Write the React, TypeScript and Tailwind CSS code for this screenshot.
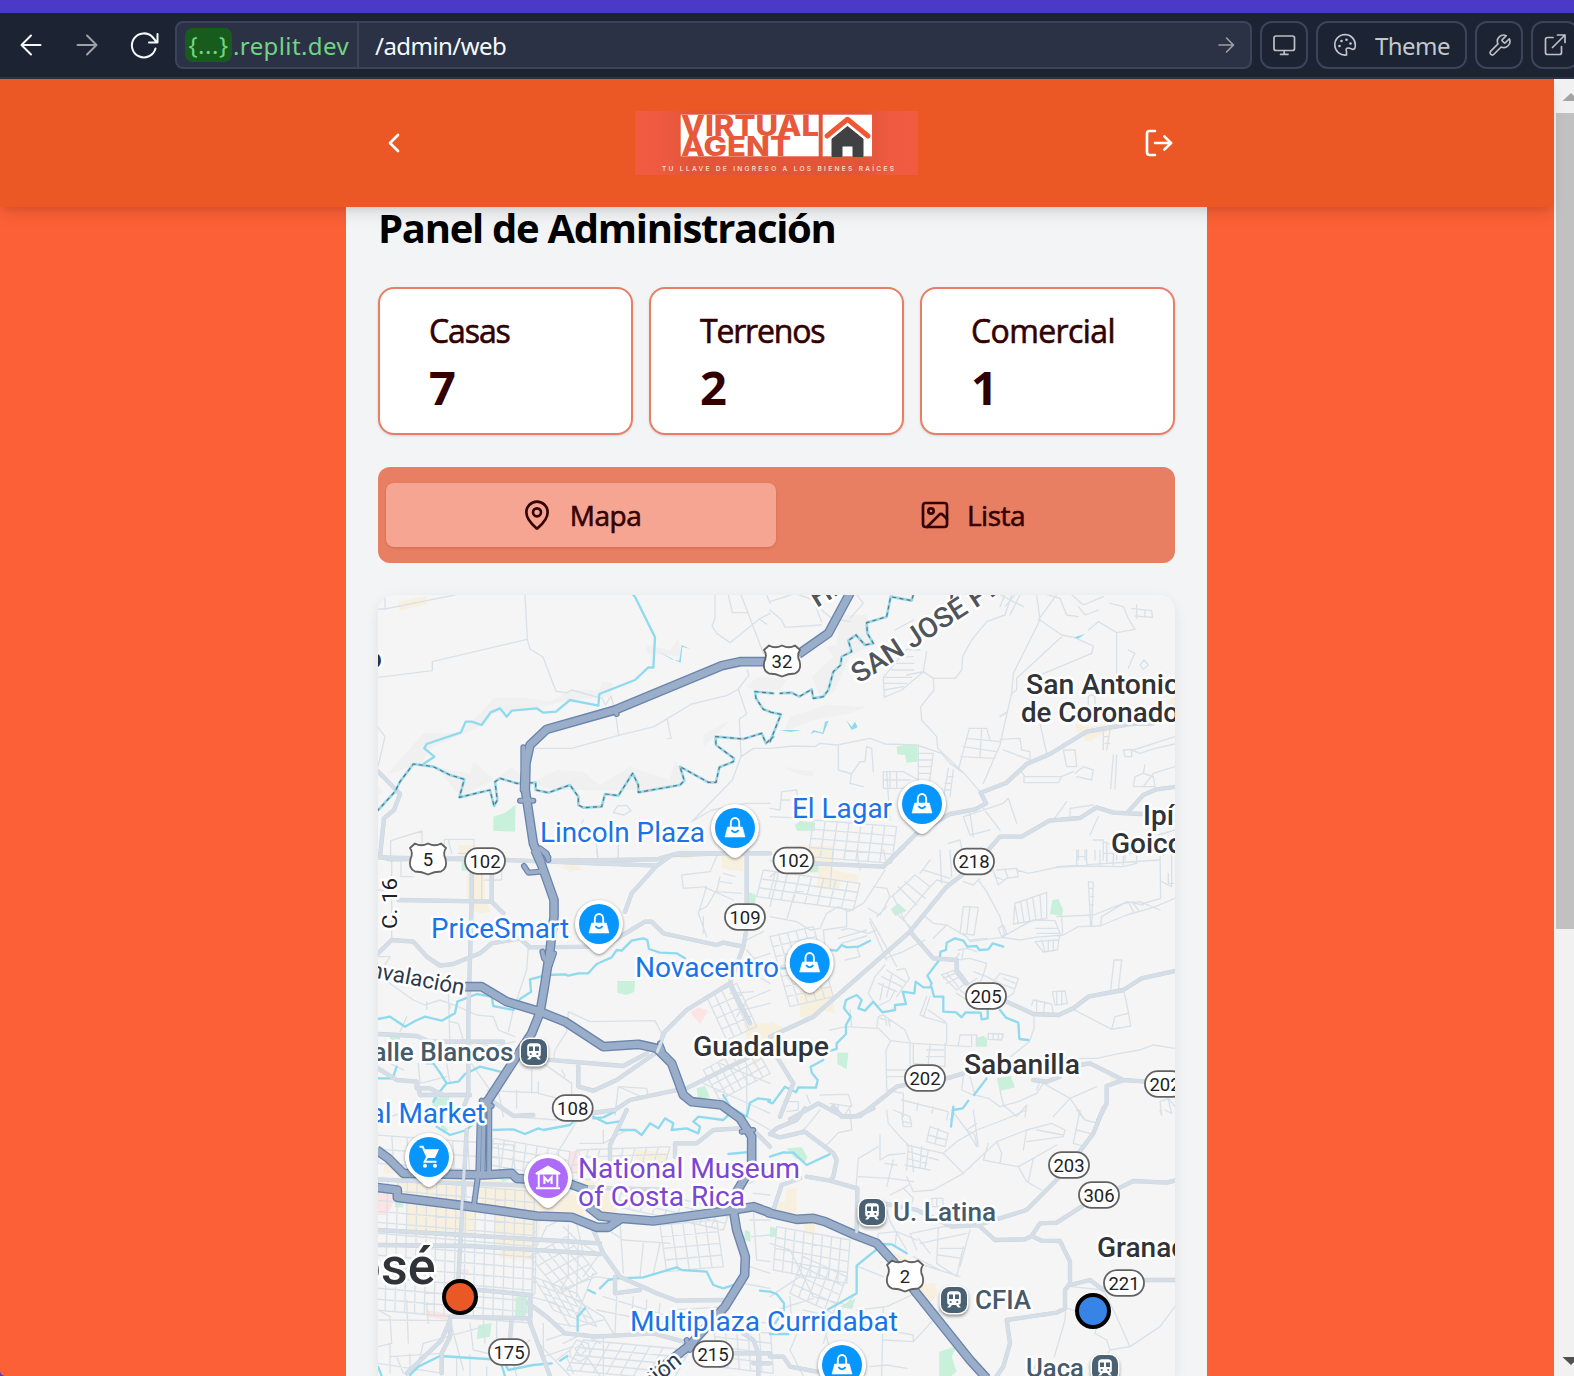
import React from "react";
import { ChevronLeft, LogOut, MapPin, Image as ImageIcon } from "lucide-react";

type Sheet = "A" | "B" | "C" | "D" | "E" | "F";
type Seg = [Sheet, string];

/* The map is surveyed in six sheets, each drawn at three units per pixel. */
const origin: Record<Sheet, string> = {
  A: "translate(370 590) scale(0.33333)",
  B: "translate(770 590) scale(0.33333)",
  C: "translate(370 850) scale(0.33333)",
  D: "translate(770 850) scale(0.33333)",
  E: "translate(370 1110) scale(0.33333)",
  F: "translate(770 1110) scale(0.33333)",
};

/* Builds a street grid: lines across a parallelogram with given corner and side vectors. */
const grid = (x: number, y: number, ux: number, uy: number, vx: number, vy: number, n: number, m: number) => {
  let d = "";
  for (let i = 0; i <= n; i++) d += `M${x + (ux * i) / n} ${y + (uy * i) / n}l${vx} ${vy}`;
  for (let j = 0; j <= m; j++) d += `M${x + (vx * j) / m} ${y + (vy * j) / m}l${ux} ${uy}`;
  return d;
};

const minor: Seg[] = [
  ["A", "M20 57L45 57L260 14M45 57V14M465 14L472 148L187 215V242L24 262M472 148L480 177L519 201L558 304L590 308L605 300L697 326L706 345L723 318L735 360L746 436M495 475H605L746 436L852 410L965 342L1070 317L1105 297L1137 255L1132 240M1105 297L1130 372L1108 387L1113 500L1087 570L965 695M892 390L903 445L893 446M1113 500L1150 475H1200M24 412L45 440L24 530M1035 14V85L1026 108L1040 130L1080 158L1168 87L1200 70M1075 14L1087 68H1130M1113 14L1180 190M1168 87L1190 102M1190 14L1200 40M62 810V752L156 723V765M223 810V748H312V790M235 750L245 790M265 790H400M965 695L1025 660L1130 640H1200M730 668L742 648L770 646L783 662L762 675Z M675 735L685 810M745 712V810M635 700L640 690"],
  ["B", "M0 60L35 90L45 112L155 105M0 35L65 14M85 14L130 30L155 95M155 60L185 85L240 95M260 14L280 40L240 85M375 120L430 90M470 185L460 245L410 255M340 262L410 178L450 180M340 262L343 322L395 300L460 245L490 265L555 265L575 240L578 200L605 150L650 95L705 75L725 14M490 265L492 300L452 350L455 390L500 440L503 475L580 548L630 605M800 14L810 90L730 250L725 310L712 365L690 465L640 580M725 310L740 300V265L875 140M810 90L875 135L912 142L970 168L965 190L770 272M712 365L690 380M810 400L830 490M750 14L720 75M860 14L805 90M345 262H425M345 280H410M343 300L400 290M365 240H430M370 220H432M385 200H430M705 14L690 50M735 14L705 50M690 14L760 50M830 14L870 25L890 75L925 80M905 14L940 45L1000 20M925 50L945 75L985 60M955 120L985 95L1040 128L1095 118L1075 85L1060 50L1020 40M1040 128V275M1085 55L1145 62L1147 82L1095 78M1100 45V85M1125 60V80M1075 180L1095 190L1085 210L1075 235M1110 225L1122 210L1135 225L1120 238Z M955 320V360M975 320V360M955 320Q965 310 975 320"],
  ["B", "M0 475L70 468L135 470L150 460L200 465L300 445L345 462L440 465L515 490L540 520L580 548M205 465V540L245 552L240 580L280 590M245 552L270 515L285 515M285 515L290 470L305 475L310 545M340 545H400L445 570M340 545V595H420M340 570H420M360 545V595M380 548V595M445 465V580M445 490H490M445 510H485M445 530H485M445 550H480M490 490L475 600M535 535L520 625M550 540L540 620M530 560H550M525 580H545M522 600H542M598 415H650M598 415L565 540M650 415L660 450M590 445L690 455M580 470L680 485M572 500L670 505M635 415L630 500M690 448L750 445L755 480L780 485V510L700 480M750 540L765 560H875L910 545M762 560V578H865L875 560M880 480H915L920 530L890 530ZM915 550L940 530L970 540L965 570L920 560M1000 425V480M1020 420L1010 480M1030 495L1022 595M1040 495L1035 595M1000 440H1015M1005 460H1020M1060 480L1085 478V500H1065ZM1085 480L1110 490L1155 475M1125 525L1120 550L1150 560L1155 590H1090L1095 560L1120 550M1155 475L1215 462M1090 480L1215 440M1120 590L1150 550L1215 530M0 655L30 660L35 605L80 600L82 630M0 680L110 685M350 545L360 690M35 630H60"],
  ["B", grid(130, 690, 250, 20, -15, 110, 7, 4) + "M580 680L700 640L715 625L740 700M580 680L600 735L660 720M600 670L610 740M640 655L690 720M535 760L570 750L580 800M890 635L850 690M900 690V655L970 645M985 680L960 735M970 750H1000V810M925 780V810M945 780V810M1000 755L1090 790M1010 760V810M1040 770V810M1065 780V810M1000 790H1090M1165 735L1215 720M1175 735L1180 770L1215 775"],
  ["C", "M65 20V270M24 120H65M93 30V80H130M395 90V30M395 90H345M310 150V35M335 150V35M680 0L685 40M745 0V38M935 75L1020 65L1040 20M935 75L940 115L1010 110M1010 110L985 190L1010 260M1000 110L1090 150M1040 120L1010 170L990 180M1050 80L1040 125L1115 130M1060 70L1095 80M1050 95L1085 100M1000 200V250M475 290L470 360L430 480L415 545M24 375L130 450L165 465L210 450L265 470L320 495L370 500L385 540L435 560M170 455V478M240 460V475M300 490L295 520M160 385L175 395M24 320L60 320L45 345M590 545L595 485L660 515L855 512L880 560L875 600M590 545L555 600L550 630M520 640L605 700V750M575 660L585 680M235 420L240 600L230 640L240 700M240 515L265 520L280 570L370 590L435 575M300 570L290 620L360 720M90 545L110 500M485 660V730M350 722L505 728V695M735 795L745 710L830 715L835 740L790 745M750 712L810 738M1100 500L1130 450L1200 420M1080 430L1150 425M1120 480L1200 460M1130 300L1200 380M1130 270L1180 245M1140 330L1200 310M1130 360L1200 400"],
  ["C", grid(1000, 660, 150, -80, 50, 90, 7, 4) + grid(1010, 440, 90, -40, 60, 130, 4, 4) + "M1150 600L1200 580M1050 640L1200 700M1130 650V800M1000 700L1200 790M24 600H60V640L100 660M145 640L150 700L230 680M440 720V775M380 700L400 800M505 730L620 760"],
  ["D", grid(-20, 60, 290, 40, -20, 80, 8, 3) + grid(0, 260, 130, -30, 60, 210, 5, 7) + "M0 200L80 215L120 240L150 235L170 190L205 170L235 185L280 160L310 115L345 60M100 125H75L50 210M230 185V230L160 240M160 240L165 290M215 240L235 235L295 250L320 240L300 205M205 265L290 240M215 280L290 258M220 290L260 290L270 320L225 330M300 215L350 330M315 230L380 350M345 325L400 305L465 270M310 110L350 115L360 140L330 195L295 175M365 140L435 75L480 110L400 205L370 140M385 110L440 165M405 95L465 145M370 180L430 240M400 205L425 245M350 170L320 200M480 110L500 90L540 100M450 70L480 30M460 60L540 85M510 0L515 100M540 0L545 80M460 195L490 220L530 225L590 260L600 275L695 262L770 220L790 210M530 225L490 265M625 90L650 125L690 200L705 258M570 250L580 170L625 172L612 255ZM600 170L590 250M685 235L700 225L710 250L695 260ZM740 60L775 70L860 52L935 48L1060 50L1100 40M650 70L670 60L685 105L710 85L745 80L740 55L680 60M675 80L700 90M705 60L715 85M580 95L610 105L630 85M860 50L1170 30M920 0V48H950V0M920 20H950M975 30V0M990 45V0M1010 45V0M1030 45V0M1060 45V0M1100 40V0"],
  ["D", "M735 160L830 127V205L730 222ZM735 165L745 220M752 155L762 218M770 150L780 215M788 143L798 210M810 135L815 208M790 210L855 212L870 250L862 300L820 306L795 275L865 270M798 235H860M800 250H865M815 270L825 305M835 270V305M850 270V303M695 262L750 270L795 262L880 255L925 230L990 228L1070 195L1150 172L1215 145M860 200L970 195L1060 160L1110 155L1170 180M875 200L878 250M955 95L970 97L965 228M955 95L962 228M960 115H970M962 140H972M960 165H970M992 225L995 200L1070 155L1120 165M1075 155L1090 185M1085 155L1105 180M1170 0L1172 145L1115 162M1205 0V110L1175 95M1195 70V100H1210M1022 420L1032 330H1055L1045 420M910 478L1025 538L1082 528L1075 485L1062 425M1025 538L1035 500L1075 490M785 465L790 450L845 462L850 490M800 450V490M825 455L820 490M847 425L885 423L892 460L855 465ZM860 425V465M875 425V465M792 500V535L778 575L722 620M600 270L650 265M565 300L590 295L620 305M568 310L555 330L600 325L650 340L640 375M580 300L575 330M515 375L550 362L585 405L600 400M515 375L560 420L580 405M530 370L565 410M520 385L555 370M530 400L570 380M560 430L590 450L600 470M570 420L600 445M690 370L745 385L730 430L700 450M690 370L660 410M700 385L735 400M690 400L730 415M610 365L650 380L690 400M620 385L600 400M640 375L625 410M345 345L315 380L295 430L320 470L360 450M325 400L380 425M335 380L395 410M350 360L405 395M340 400L330 450M365 375L350 440M380 360L405 355L418 385L380 440M360 450L375 420"],
  ["D", "M230 530L320 535L325 500L340 495L405 540L420 575M325 500L320 535M325 535L362 572L430 580L600 590M362 572L348 600L350 720L400 730V800M420 575V650M350 660H415M350 680H400M430 580V640L480 645L525 650V580M480 585L475 640M470 600H525M470 620H525M480 440L460 500L530 520V580M470 440L450 495L475 505M475 480L525 515M330 505L370 515M345 500L350 525M355 505L360 530M570 555L565 585M570 555H620V585M655 550L700 552L695 570L655 568ZM670 550V568M685 550V568M605 560V590M600 680L615 735L655 745L690 770L745 755L800 730L820 700L900 745L980 710M820 700L812 690L800 720M900 745L850 800M580 680L575 720L610 735M690 720L700 765L740 800L770 765L765 800M1050 610L1110 600L1150 585L1215 595M830 625L980 625L1050 610M900 745L945 810M1170 755L1195 745L1215 770M1170 755L1175 795M1195 750L1205 790M395 750L535 785L530 810M150 735L235 733L245 765L220 800M180 760L245 770M205 765L200 790M40 755H85V780L50 785M110 735L120 760M445 758L440 780M490 770L485 790M240 480L245 530M180 540L230 530"],
  ["E", grid(20, 75, 410, 30, 5, 85, 9, 2) + grid(24, 205, 470, 40, -8, 395, 16, 12) + grid(370, 85, 230, 40, -10, 80, 7, 3) + grid(490, 335, 10, -10, -5, 225, 1, 6)],
  ["E", grid(620, 120, 280, -10, -25, 90, 8, 4) + grid(760, 230, 320, 70, -20, 60, 9, 3) + grid(870, 345, 170, -15, 20, 140, 5, 4) + grid(480, 440, 110, -60, 90, 110, 5, 4) + grid(490, 500, 130, 50, 60, 100, 5, 4)],
  ["E", "M495 420L530 350L580 325M580 350L620 390L690 435M595 345V500L570 540M625 390L620 560M690 430L640 500M570 540L680 500L740 510M750 335L760 490M820 400L810 500M700 350L760 390L900 400M870 400L850 490M620 340L640 430M480 560L560 580L600 650M670 490L620 620M600 560L700 620L730 670M560 640L620 650L700 630M900 660V600L1080 590M700 560L900 620M740 560L735 670M790 560L780 670M830 570L825 670M870 580L860 670M680 600L880 640M24 630L240 632M24 600L60 620L65 700L24 710M110 570L115 700M140 780L160 700L340 650M240 630L280 780M170 580L175 640M60 740L220 730M60 700V790M120 730V798M300 640L310 720L440 750M340 620L345 700M380 620V700M100 790L80 740M24 760L220 790M260 740V798M300 735V798M350 770V798M480 690L440 720M420 700L360 740M430 760L440 798M520 640V740L610 710M530 690L590 670"],
  ["E", grid(640, 690, 320, 30, -50, 90, 8, 4) + grid(1030, 620, 170, 20, 10, 150, 5, 5) + "M600 720L620 690L655 700L660 735L630 755L600 740ZM580 700L640 670L690 700M590 740L610 790M650 740L690 798M615 715L635 702L648 720L630 738ZM560 750L600 720M700 680V798M505 700L600 798M1130 20L1200 60M1140 220L1200 180M1150 250L1200 255M1140 330H1200M1145 380L1200 375M1150 300L1160 450L1200 455M1140 470L1200 490M1120 520L1200 535M640 0L580 100L560 130M24 30L130 0M400 0L430 20L560 30M770 60L700 100L630 100M700 100L700 60"],
  ["F", "M150 0L110 50L85 70M240 0L245 60L205 68L170 105M350 0L355 40L390 80L415 105L410 180M370 0L420 20L425 50L400 50L395 10M400 35L425 40M330 75V150L355 135L405 130M325 110L265 145L258 235M265 200L360 205L430 215M345 160L380 165M370 150L350 230M410 105L520 130L560 95L620 60L700 30L770 0M415 125L505 150M410 145L470 160M405 165L480 180M425 105L430 185M455 110L450 170M475 120L465 175M480 50L535 70L525 110L470 95ZM505 55L495 100M475 75L530 90M520 130L580 190L490 240L430 245L410 200M580 190L680 95L770 60M590 60L615 75L620 110M545 0L590 60L620 40M610 0L625 110M680 95L695 130L690 160L745 170L790 145L860 105M655 100L640 150L690 160M745 170L770 215L815 240M790 145L775 215M770 60L845 40L885 60L880 80L770 95M800 60L880 75M770 60L760 120M920 0L945 30L985 40M930 0L910 100L945 110M920 60L960 70M1170 0L1175 15M1185 0L1205 10M400 235L430 265L425 280M360 255L400 235L415 225M485 265H518L520 300M485 265V290H520M500 265V290"],
  ["F", grid(20, 350, 220, 40, -10, 130, 8, 4) + grid(100, 440, 130, 60, -40, 110, 5, 4) + "M0 400L60 420L130 560L250 590M0 560L90 500M20 600L130 565M60 560L65 640M250 560L180 640L160 700M350 300L360 335L410 420M450 400L590 370M425 370L520 350L570 350M505 355L500 460L560 500L580 410M600 360L570 470M510 415H580M505 435L575 445M460 465L570 500M430 440L510 480M325 370L380 365L440 390M325 370L320 400M380 365L375 410M420 370L440 420M445 385L480 430M260 600L350 590L425 555M265 470L340 500M100 600L270 640M160 640L180 720M210 650L340 640M290 650L430 675V695L340 690M340 590L335 798M430 695L490 630L510 600M300 770L350 765L410 775M90 650L60 720L100 798M890 550L885 630L853 740M905 530L1000 540L1035 610L1080 710M890 595L950 610L985 635L975 670L1010 690L1020 720L1080 710L1170 650L1215 590M800 760L780 798M1020 720L1000 760M590 60L620 110"],
  ["D", "M0 30L30 50L0 170M30 60L0 80M100 0L90 50M190 0L180 110M260 0L270 60M340 0L350 40"],
];

const arterial: Seg[] = [
  ["A", "M20 540L90 612L72 660L42 685L30 800L60 808L290 805M550 812L860 808M870 805L925 790H1200"],
  ["B", "M360 810L440 730L540 672L615 658L648 640L632 608L710 578L770 522L840 492L950 425L1080 402L1150 400M655 780L690 740L755 740L838 692L930 684L980 652L1030 668L1115 672M1075 665L1120 615L1160 598L1220 590"],
  ["C", "M24 22L290 28M410 30L860 47L905 15L1060 10M860 47L785 130L765 185M1130 0V165M1130 235L1120 290L1060 278L1040 285L880 250L845 215L825 215L700 290L480 292L450 265M85 150L365 155L400 190M365 30V155M305 60V155L295 500V735L270 800M24 310L65 270L130 275L170 320L210 347L250 342L330 310L365 280L450 265M1120 290L1080 400L950 480L880 550L865 600M1080 400L1140 520M24 552L140 558L180 575L400 575M520 628L760 648L830 610M625 640V710L670 722L740 690L870 600M930 725L1200 590M930 718L780 750L735 780L600 798L560 800M490 795L430 798L370 755M300 735H150L140 695L80 690L24 655M140 695V715H180L220 735H300"],
  ["D", "M340 50L400 -10M340 50L130 40M580 72L530 110L420 245L130 500L0 560M420 245L490 325L560 330V360L590 400M710 455L790 492L865 495L910 475L955 440L1060 420L1115 385L1220 362M530 685L580 670M405 705L380 710L270 798L220 800L145 760L60 808M20 620L70 700L30 800M790 690L830 695L870 680M930 645L960 640L1060 690L1130 695M1060 690L1010 708L1010 760L985 810"],
  ["F", "M0 72L30 82L105 65L190 130L200 150L190 200L180 212L110 200M105 -5L80 30L20 55L0 72M190 -10L215 20L260 18L310 -5M180 212L262 235L260 365M10 300L35 225L90 205M340 280L440 300L545 350L625 345L770 300L865 205M1000 -5L970 70L925 130M625 345L675 390L765 388L785 378L810 340L860 338L935 290M785 378L815 392L870 393L900 455L900 520L885 540L885 595L860 608L710 630L720 700L700 770L680 798M900 525L960 510L1000 540M1045 235L1090 213L1190 218L1220 210M1115 510H1215M0 740H40L60 770L140 785"],
  ["E", "M24 208L275 220L890 240M24 360L280 375L520 390L690 400M24 405L300 408L690 432M290 60L265 510M240 540H330L480 555V620M240 620L475 625L540 798M475 580L530 620L585 670L680 680L850 670L960 700L1020 730M425 625L420 690M240 630L215 690L110 790M240 630V680L215 730V790M670 360L700 430L750 500L860 550L920 572L1060 570M735 500V550L810 540M680 190L720 160L720 105L770 0M915 140V100H980L1030 60L1110 55L1160 70L1200 110M1120 670L1150 690L1165 730V798M1070 730H1200M1150 760H1200"],
];

const mountain: Seg[] = [
  ["A", "M50 555L160 430L270 430L335 365L370 325L470 325L540 335L600 300L690 300L695 275L730 280L720 320L600 330L500 355L370 370L330 410L190 470L150 520Z M195 525L235 540L300 550L310 515L375 570L425 530L480 580L560 540L640 545L690 585L780 530L900 570L915 510L950 580L880 600L700 600L560 600L390 560L270 620Z M1000 470V435L1080 390L1040 435Z M830 165L900 180L925 145L935 200L830 190Z M24 590L40 605L24 615Z M1130 290L1160 262H1200V300H1150Z"],
  ["B", "M125 260L190 200L170 170L200 165L205 75L290 75L310 160L240 200L190 310L150 320Z M60 380L170 345L290 350L240 370L130 390L80 410L40 430Z M35 530L130 545L130 560L90 555Z M0 260L50 270L30 300H0Z"],
];

const parks: Seg[] = [
  ["A", "M370 680L405 668L437 645L435 725L370 722Z"],
  ["B", "M380 470L410 463L442 467L443 515L410 518L405 495L382 493Z M75 705L90 693L135 697V722H80Z"],
  ["C", "M742 393H795L793 425L770 435L742 428Z M1135 125L1158 135L1155 160L1135 158Z M980 715L1005 708L1020 740L985 750Z M190 745L240 740L225 780H185Z M275 35H290V62H275Z M60 560H90V575H60Z"],
  ["D", "M120 42H145V67H120Z M362 178L385 160L410 182L375 198Z M847 150L865 147L880 180L875 198L840 192Z M202 608H235L230 657L202 643Z M617 565L640 557L652 567L650 590H617Z M680 685L722 678L735 712L690 723Z"],
  ["E", "M437 560L470 555L473 600L465 622L435 620Z M325 645L365 640L360 680L320 687Z M1125 360L1140 365L1142 395L1122 390Z M75 275H100V292H75Z M205 30L235 60L220 70Z M380 200L430 205L400 215Z"],
  ["F", "M50 115L95 112L112 140L105 155L75 145Z M0 350L20 355L18 380L0 382Z M210 590L257 565L245 598Z M508 725L560 708L545 740L560 785L540 800H508Z"],
];

const shops: Seg[] = [
  ["A", "M85 35L170 18L172 42L90 62Z M265 765H310L325 795L270 798Z M585 805L625 800V810H585Z M930 782H970V805H930Z"],
  ["B", "M918 402L955 410L1040 402L1060 410L1000 430L960 455L945 450L940 430L920 425Z M80 765L190 768V810H80Z M1190 335L1215 320V345H1195Z"],
  ["C", "M290 75L345 72V150L362 185L330 190L305 180L290 150Z M570 50L600 42L632 50V60L600 65Z M1055 10H1120V65L1055 55Z M1120 520L1200 520V610L1150 650Z"],
  ["D", "M110 0L190 10L185 60L265 75V95L215 90L205 120L140 115L145 70L100 40Z M90 400L180 415L195 490L150 480L130 510L90 500Z M0 515L40 530L40 570H0Z M1020 675L1050 690L1055 705L1025 700Z"],
  ["E", "M50 120L80 165L100 190L40 190Z M80 205L280 210V280L90 262Z M110 280L320 305L315 370L110 380Z M325 200L480 230L620 270L600 320L330 290Z M380 300L515 320L500 410L490 450L390 445V410L370 380Z M620 190L740 250V310L700 310L650 290Z M790 115L890 130L895 160L800 155Z M590 250L640 260V320L600 315Z"],
  ["F", "M50 235H80V310L20 310L15 280L45 275Z M75 315L135 320L135 375L110 378L100 345L80 340Z M335 440L375 430L430 455L400 470L370 460Z M430 520L495 520L503 550L465 600L440 570Z"],
];

const clinics: Seg[] = [
  ["C", "M960 487L985 472L1015 482L990 522Z"],
  ["E", "M24 245H75L65 290L50 315H24Z M600 125L632 120L625 200L598 170Z M268 477H295V495L270 493Z M168 600L240 612V632L170 620Z"],
];

const water: Seg[] = [
  ["A", "M785 10L795 20L855 142L850 233L835 232L795 270L688 312L685 347L600 330L558 365L520 368L500 355L425 362L410 380L390 355L362 367L335 405L305 395H287L273 427L170 462L163 475L193 500L160 522"],
  ["C", "M530 375L585 373L595 377L625 370H655L680 342L725 322L740 300L755 302L785 272L820 265L832 270L837 297L870 308L920 310L945 325M530 375L480 388L483 425L450 447L430 480L370 468L365 440L320 432L262 455L255 490L215 512L165 500L135 513L105 530L60 500L24 507M390 665L330 650L285 672L265 695L230 700L210 668L190 640L170 640M230 700L205 730L190 755M80 650L68 685L24 685M670 805L700 802L735 785M1200 750L1165 745L1140 758L1130 800L1080 770L1060 735"],
  ["D", "M180 300L200 302L215 285L230 292L265 290L300 272M700 290L668 280L655 298L628 300L620 288L592 290L580 272L555 265L530 278L528 300L512 305L508 330L472 377L485 400L480 412L460 412L437 395L433 430L398 425L408 462L375 465V480L337 487L310 455L285 482L265 475L275 450L260 435L228 450L222 475L242 500L228 525V552L200 580V597L182 602M160 630L122 650L125 668L143 690L138 713L85 712L78 727L45 710L8 760L-5 755M485 412L492 440H520V485L558 487L575 502L587 487L632 488L635 508L653 505V480M690 480L708 503L745 518L748 567L775 570M650 685L612 735M595 752L578 775L550 780L545 810M20 355L45 355"],
  ["F", "M550 -10L543 50M0 140L40 127L70 128L110 165L178 133M410 430L365 403L340 402L260 467V550L175 598M0 545L20 552L42 580V600L15 640M0 672H55"],
  ["E", "M370 60L430 58L465 72L505 55L520 60L600 45L625 20M670 20L710 40L745 35M750 60L795 60L815 75L840 40L865 55L885 25L910 40L905 60L950 55L985 70L990 50L970 35L985 20L1060 30L1080 10M1075 132L1150 125M690 535L715 510L740 505L820 502L920 472L935 480L1010 485L1030 525L1060 535L1120 515M655 540L675 550M645 595L623 620V662M120 795L145 770L210 738L400 750L415 780L490 765L545 760M405 798L390 750M570 752L592 738M24 770L35 798M200 50L240 75L290 60L310 40M1170 542L1200 545"],
];
const border: Seg[] = [
  ["A", "M20 665L75 605L90 575L130 522L190 530L240 555L283 568L268 622L360 600L372 648L382 630L375 575L390 565L440 580L497 578V600L535 608L600 585L625 620V645L640 653L695 650L705 612L745 617L788 550L805 585V607L930 585L943 572L930 530L1015 577H1038L1048 532L1090 515L1092 505L1038 465L1037 440L1120 447L1175 430L1188 460L1210 440M1210 310L1155 305L1158 325L1180 358L1200 365"],
  ["B", "M430 14L425 32L362 20L350 80L290 98L292 130L310 160L285 165L258 135L235 152L245 185L215 200L212 225L190 245L175 300L160 320L130 325L125 298L88 320L65 308L30 310M0 366L33 373L0 455"],
];

const highways: Seg[] = [
  ["A", "M1190 215L1110 215L1055 227L735 360L530 418L480 465L468 520L466 600L475 660L490 760L515 820"],
  ["B", "M85 193L175 130L245 0"],
  ["C", "M495 0L515 45L552 150L552 200L540 300L525 400L510 488L485 550L355 750L340 765"],
  ["C", "M285 410L335 410L410 455L510 485L585 515L700 590L805 583L860 595L905 640L940 735L965 755L1055 765L1110 805L1145 860L1145 950L1100 1025"],
  ["E", "M1090 300L1100 360L1126 440L1124 495L1065 590L960 705L840 800"],
  ["E", "M20 120L55 145L100 190L340 195L425 190L440 205L480 208M600 222L650 240M655 290L690 318L750 325"],
  ["E", "M20 232L82 240L82 262L280 287L500 318L605 322L680 352L715 352L755 325L850 333L1090 300L1150 290L1200 308"],
  ["F", "M-10 307L80 328L130 325L165 335L255 375L320 400L370 455L440 550L600 750L650 805"],
];
const ramps: Seg[] = [
  ["A", "M460 472V540L458 600M450 632L490 632M735 360L740 372M510 775L530 790L535 810"],
  ["C", "M462 48L475 68L510 65M517 305L522 325L540 345L552 310M520 5L535 22M870 580L878 600M335 752L365 768"],
  ["E", "M330 -15L325 190L312 285M358 -15L357 190L345 195M342 -15L338 190M1115 65L1150 60M950 690L960 720L985 680"],
];

function Lines({ segs, stroke, width, dash, cap = "round" }: { segs: Seg[]; stroke: string; width: number; dash?: string; cap?: "round" | "butt" }) {
  return (
    <g fill="none" stroke={stroke} strokeWidth={width} strokeDasharray={dash} strokeLinejoin="round" strokeLinecap={cap}>
      {segs.map(([s, d], i) => (
        <path key={i} d={d} transform={origin[s]} />
      ))}
    </g>
  );
}
function Areas({ segs, fill }: { segs: Seg[]; fill: string }) {
  return (
    <g fill={fill}>
      {segs.map(([s, d], i) => (
        <path key={i} d={d} transform={origin[s]} />
      ))}
    </g>
  );
}

type LabelProps = { x: number; y: number; w?: number; size?: number; color: string; weight?: number; end?: boolean; turn?: number; children: string };
function Label({ x, y, w, size = 28, color, weight = 400, end, turn, children }: LabelProps) {
  return (
    <text
      x={x}
      y={y}
      textLength={w}
      lengthAdjust="spacingAndGlyphs"
      fontSize={size}
      fontWeight={weight}
      fill={color}
      textAnchor={end ? "end" : "start"}
      transform={turn ? `rotate(${turn} ${x} ${y})` : undefined}
      stroke="#ffffff"
      strokeWidth={5}
      strokeLinejoin="round"
      paintOrder="stroke"
    >
      {children}
    </text>
  );
}

function Route({ x, y, children }: { x: number; y: number; children: string }) {
  return (
    <g>
      <rect x={x - 20} y={y - 12.8} width={40} height={25.6} rx={12.8} fill="#fff" stroke="#616161" strokeWidth={1.8} />
      <text x={x} y={y + 6.7} textAnchor="middle" fontSize={18.5} fill="#202124">{children}</text>
    </g>
  );
}
function Shield({ x, y, children }: { x: number; y: number; children: string }) {
  return (
    <g>
      <path
        transform={`translate(${x} ${y})`}
        d="M-13 -15.5Q-7 -12 0 -15.5Q7 -12 13 -15.5L18 -11Q14.500 -6 17.500 0Q20 9 13 12.500Q6 12.500 0 15.500Q-6 12.500 -13 12.500Q-20 9 -17.500 0Q-14.500 -6 -18 -11Z"
        fill="#fff"
        stroke="#616161"
        strokeWidth={1.8}
        strokeLinejoin="round"
      />
      <text x={x} y={y + 6.5} textAnchor="middle" fontSize={18.5} fill="#202124">{children}</text>
    </g>
  );
}

function Pin({ x, y, kind = "bag" }: { x: number; y: number; kind?: "bag" | "cart" | "museum" }) {
  return (
    <g transform={`translate(${x} ${y})`}>
      <path
        d="M0 -24A24 24 0 0 1 18.500 15.300L5 28Q0 32 -5 28L-18.500 15.300A24 24 0 0 1 0 -24Z"
        fill="#fff"
        style={{ filter: "drop-shadow(0 1.5px 1.5px rgba(0,0,0,.45))" }}
      />
      <circle r={20} fill={kind === "museum" ? "#ae6bfa" : "#0696fe"} />
      {kind === "bag" && (
        <g>
          <path d="M-7.300 -1H7.300L10 9H-10Z" fill="#fff" stroke="#fff" strokeWidth={.6} />
          <path d="M-4.200 0V-5A4.200 5 0 0 1 4.200 -5V0" fill="none" stroke="#fff" strokeWidth={1.900} />
          <path d="M-3.600 2.200Q0 6.500 3.600 2.200" fill="none" stroke="#0696fe" strokeWidth={1.8} />
        </g>
      )}
      {kind === "cart" && (
        <g>
          <path d="M-9.500 -10.200H-6.300L-1.500 0.500" fill="none" stroke="#fff" strokeWidth={2} />
          <path d="M-6 -7.700H10L6 1H-2Z" fill="#fff" />
          <path d="M-2 .3L-4.300 4.700H7.500" fill="none" stroke="#fff" strokeWidth={2} />
          <circle cx={-4} cy={8.800} r={2} fill="#fff" />
          <circle cx={6} cy={8.800} r={2} fill="#fff" />
        </g>
      )}
      {kind === "museum" && (
        <g fill="none" stroke="#fff">
          <path d="M-12 -5L0 -12L12 -5V-4H-12Z" fill="#fff" strokeWidth={1} />
          <path d="M-9.300 -4V9M9.300 -4V9M-12 10.200H12" strokeWidth={2} />
          <path d="M-3.600 6V-.5L0 3.500L3.600 -.5V6" strokeWidth={2.1} />
        </g>
      )}
    </g>
  );
}

function Station({ x, y }: { x: number; y: number }) {
  return (
    <g transform={`translate(${x} ${y})`}>
      <rect x={-14.500} y={-14.500} width={29} height={29} rx={10} fill="#fff" style={{ filter: "drop-shadow(0 2px 1.5px rgba(0,0,0,.4))" }} />
      <rect x={-13} y={-13} width={26} height={26} rx={8.500} fill="#4a6173" />
      <path d="M-6.800 -5.500Q-6.800 -8.500 -3 -8.700H3Q6.800 -8.500 6.800 -5.500V2.500Q6.800 4.800 4.500 4.800L7 7.500H4L2 5H-2L-4 7.500H-7L-4.500 4.800Q-6.800 4.800 -6.800 2.500Z" fill="#fff" />
      <path d="M-5 -5.500H-1V-1H-5ZM1 -5.500H5V-1H1Z" fill="#4a6173" />
      <circle cx={-3.300} cy={2} r={1.100} fill="#4a6173" />
      <circle cx={3.300} cy={2} r={1.100} fill="#4a6173" />
    </g>
  );
}

const blue = "#1a73e8";
const slate = "#455a6b";
const ink = "#303338";

function CityMap() {
  return (
    <svg viewBox="378 595 797 781" className="block h-[781px] w-[797px]" style={{ fontFamily: "Roboto, sans-serif" }}>
      <rect x={378} y={595} width={797} height={781} fill="#f5f5f5" />
      <Areas segs={mountain} fill="#f0f0f0" />
      <Areas segs={shops} fill="#f8f0df" />
      <Areas segs={clinics} fill="#fce4e4" />
      <Areas segs={parks} fill="#c8f0da" />
      <Lines segs={minor} stroke="#d9e1e8" width={4} />
      <Lines segs={water} stroke="#90daee" width={7} />
      <g fill="#90daee">
        <path transform={origin.A} d="M860 182L925 215L932 218L937 170L960 177L935 165L928 212L905 208Z" />
        <path transform={origin.B} d="M28 420L95 420L60 426ZM122 432L130 420L158 428L165 395L176 392L160 432L135 426ZM228 390L245 410L255 395L263 412L245 420ZM912 142L945 132L925 146Z" />
      </g>
      <Lines segs={arterial} stroke="#c8d3dd" width={13} />
      <Lines segs={arterial} stroke="#d5dee6" width={11} />
      <Lines segs={border} stroke="#90daee" width={8} />
      <Lines segs={border} stroke="#6a6f74" width={3.6} dash="12 10" cap="butt" />
      <Lines segs={ramps} stroke="#6a84ad" width={18} />
      <Lines segs={highways} stroke="#6a84ad" width={29} cap="butt" />
      <Lines segs={ramps} stroke="#9aaeca" width={11} />
      <Lines segs={highways} stroke="#9aaeca" width={21} cap="butt" />
      <Lines segs={[["E", "M290 60L275 300"], ["C", "M885 550L862 605"], ["F", "M262 235L260 365"]]} stroke="#d5dee6" width={9} />

      <Label x={817} y={608} turn={-32} color="#50555c" weight={500}>HEREDIA PROVINCE</Label>
      <Label x={859} y={684} turn={-33} w={275} color="#50555c" weight={500}>SAN JOSÉ PROVINCE</Label>
      <Label x={382} y={668} end color={ink} weight={500}>Santo Domingo</Label>
      <Label x={540} y={841.5} w={165} color={blue}>Lincoln Plaza</Label>
      <Label x={792} y={817.5} w={100} color={blue}>El Lagar</Label>
      <Label x={431} y={937.5} w={138} color={blue}>PriceSmart</Label>
      <Label x={635} y={976.5} w={144} color={blue}>Novacentro</Label>
      <Label x={1026} y={693.5} w={154} color={ink} weight={500}>San Antonio</Label>
      <Label x={1021} y={721.5} w={158} color={ink} weight={500}>de Coronado</Label>
      <Label x={1143} y={825} color={ink} weight={500}>Ipís</Label>
      <Label x={1111} y={853} color={ink} weight={500}>Goicoechea</Label>
      <Label x={397} y={929} w={51} size={20.5} turn={-90} color="#202124">C. 16</Label>
      <Label x={463} y={995} size={22.5} turn={11} end color="#2b3a4c">Circunvalación</Label>
      <Label x={693} y={1055.500} w={136} color={ink} weight={500}>Guadalupe</Label>
      <Label x={964} y={1073.500} w={116} color={ink} weight={500}>Sabanilla</Label>
      <Label x={513.500} y={1061} size={26} end color={slate} weight={500}>Calle Blancos</Label>
      <Label x={485.500} y={1123} end color={blue}>Central Market</Label>
      <Label x={578} y={1177.500} w={222} color="#7b46d4">National Museum</Label>
      <Label x={578} y={1205.500} w={167} color="#7b46d4">of Costa Rica</Label>
      <Label x={893} y={1221} w={103} size={26} color={slate} weight={500}>U. Latina</Label>
      <Label x={1097} y={1257} color={ink} weight={500}>Granadilla</Label>
      <Label x={435.500} y={1283.500} size={52} end color={ink} weight={500}>San José</Label>
      <Label x={975} y={1309} w={56} size={26} color={slate} weight={500}>CFIA</Label>
      <Label x={630} y={1331} w={268} color={blue}>Multiplaza Curridabat</Label>
      <Label x={1026} y={1377} w={58} size={26} color={slate} weight={500}>Uaca</Label>
      <Label x={683} y={1363} size={23} turn={-39} end color="#2b3a4c">Circunvalación</Label>

      <Shield x={782} y={661}>32</Shield>
      <Shield x={428} y={859}>5</Shield>
      <Shield x={905} y={1276}>2</Shield>
      <Route x={485} y={861}>102</Route>
      <Route x={793.500} y={860.500}>102</Route>
      <Route x={974} y={861.500}>218</Route>
      <Route x={745} y={917}>109</Route>
      <Route x={986} y={996}>205</Route>
      <Route x={925} y={1078}>202</Route>
      <Route x={1165} y={1084}>202</Route>
      <Route x={572.700} y={1108}>108</Route>
      <Route x={1069} y={1165}>203</Route>
      <Route x={1099} y={1195}>306</Route>
      <Route x={1124} y={1283}>221</Route>
      <Route x={509} y={1352}>175</Route>
      <Route x={713} y={1354}>215</Route>

      <Station x={534} y={1052} />
      <Station x={872} y={1212} />
      <Station x={954} y={1300} />
      <Station x={1105} y={1368} />

      <Pin x={735} y={828} />
      <Pin x={922} y={804} />
      <Pin x={599} y={924} />
      <Pin x={809.700} y={963} />
      <Pin x={842} y={1365} />
      <Pin x={429} y={1157} kind="cart" />
      <Pin x={548} y={1178} kind="museum" />

      <circle cx={460} cy={1297} r={16} fill="#ea5826" stroke="#000" strokeWidth={4} />
      <circle cx={1093} cy={1311} r={16} fill="#3884e6" stroke="#000" strokeWidth={4} />
    </svg>
  );
}

function Logo() {
  return (
    <svg viewBox="635 111 283 64" className="h-16 w-[283px]">
      <defs>
        <linearGradient id="plate">
          <stop offset="0" stopColor="#f15b42" />
          <stop offset=".1" stopColor="#ee5a41" />
          <stop offset=".2" stopColor="#e15538" />
          <stop offset=".8" stopColor="#e15538" />
          <stop offset=".9" stopColor="#ef5a41" />
          <stop offset="1" stopColor="#f15b42" />
        </linearGradient>
        <clipPath id="wordmark"><rect x={680.700} y={114.700} width={138} height={41.600} /></clipPath>
      </defs>
      <rect x={635} y={111} width={283} height={64} fill="url(#plate)" />
      <rect x={680.700} y={114.700} width={138} height={41.600} fill="#fff" />
      <rect x={822.700} y={114.700} width={49.300} height={41.600} fill="#fff" />
      <g clipPath="url(#wordmark)" fill="#e8583a" fontFamily="Inter, sans-serif" fontWeight={800}>
        <text x={681} y={135.500} fontSize={29} textLength={138} lengthAdjust="spacingAndGlyphs">VIRTUAL</text>
        <text x={681} y={156} fontSize={27} textLength={110} lengthAdjust="spacingAndGlyphs">AGENT</text>
      </g>
      <path d="M832 156.500V139L847.500 126.500L863 139V156.500H853V147Q853 146 852 146H843Q842 146 842 147V156.500Z" fill="#414042" stroke="#414042" strokeLinejoin="round" />
      <path d="M827 136L847.500 119.300L868 136" fill="none" stroke="#ee5833" strokeWidth={5} strokeLinecap="round" strokeLinejoin="round" />
      <text x={662} y={171} fontSize={6.600} textLength={232} fill="#ffe3da" fontFamily="Inter, sans-serif" fontWeight={500}>TU LLAVE DE INGRESO A LOS BIENES RAÍCES</text>
    </svg>
  );
}

function Toolbar() {
  const box = "flex h-12 shrink-0 items-center justify-center border-2 border-[#3c445c]";
  return (
    <div className="flex h-[66px] w-full shrink-0 items-start overflow-hidden border-b-2 border-[#2b3245] bg-[#1c2333] pt-2 pl-[17px]">
      <div className="flex h-12 w-[158px] shrink-0 items-center">
        <svg width="28" height="28" viewBox="0 0 28 28" fill="none" stroke="#f5f9fc" strokeWidth="2" strokeLinecap="round" strokeLinejoin="round"><path d="M23.500 14H4.500M14 4.500L4.500 14L14 23.500" /></svg>
        <svg className="ml-7" width="28" height="28" viewBox="0 0 28 28" fill="none" stroke="#9da2a6" strokeWidth="2" strokeLinecap="round" strokeLinejoin="round"><path d="M4.500 14H23.500M14 4.500L23.500 14L14 23.500" /></svg>
        <svg className="ml-[27px]" width="32" height="32" viewBox="0 0 32 32" fill="none" stroke="#f5f9fc" strokeWidth="2" strokeLinecap="round" strokeLinejoin="round"><path d="M27.500 19.500A12 12 0 1 1 24.500 8L29 13.500M29.500 5V13.500H21" /></svg>
      </div>
      <div className={`${box} w-[1077px] justify-start rounded-lg bg-[#2b3245] font-['Noto_Sans'] text-[24px]`}>
        <span className="ml-2 flex h-[34px] w-[47px] items-center justify-center rounded-lg bg-[#175c1d] tracking-[0.5px] text-[#72d483]">{"{...}"}</span>
        <span className="ml-px w-[118px] whitespace-nowrap pt-0.5 text-[#72d483] tracking-[0.4px]">.replit.dev</span>
        <span className="ml-[6px] h-full w-0.5 bg-[#3c445c]" />
        <span className="ml-4 grow pt-0.5 tracking-[-0.55px] text-[#f5f9fc]">/admin/web</span>
        <svg className="mr-3" width="24" height="24" viewBox="0 0 24 24" fill="none" stroke="#9da2a6" strokeWidth="1.600" strokeLinecap="round" strokeLinejoin="round"><path d="M5 12H19.500M12.500 5L19.500 12L12.500 19" /></svg>
      </div>
      <div className={`${box} ml-2 w-12 rounded-xl`}>
        <svg width="24" height="24" viewBox="0 0 24 24" fill="none" stroke="#bcc1c6" strokeWidth="1.700" strokeLinecap="round"><rect x="2" y="3" width="20.500" height="14.500" rx="2" /><path d="M12.200 18V21M8.500 21.300H16" /></svg>
      </div>
      <div className={`${box} ml-2 w-[151px] rounded-xl font-['Noto_Sans'] text-[24px] text-[#c2c8cc]`}>
        <svg width="24" height="24" viewBox="0 0 24 24" fill="none" stroke="#c2c8cc" strokeWidth="1.600">
          <path d="M12 1.500A10.300 10.300 0 1 0 13.500 22V18.500Q12 14.700 16 15L20 16.500Q22.500 16 22.300 12A10.300 10.300 0 0 0 12 1.500Z" />
          <g fill="#c2c8cc" stroke="none"><circle cx="8.500" cy="8" r="1.300" /><circle cx="13.500" cy="6.800" r="1.300" /><circle cx="17.500" cy="10.500" r="1.300" /><circle cx="6.500" cy="13" r="1.300" /></g>
        </svg>
        <span className="ml-[18px] pt-0.5 tracking-[-0.5px]">Theme</span>
      </div>
      <div className={`${box} ml-2 w-12 rounded-xl`}>
        <svg width="25" height="25" viewBox="0 0 24 24" fill="none" stroke="#bcc1c6" strokeWidth="1.600" strokeLinejoin="round"><path d="M14.700 6.300a1 1 0 0 0 0 1.400l1.600 1.600a1 1 0 0 0 1.400 0l3.770-3.770a6 6 0 0 1-7.940 7.940l-6.910 6.910a2.120 2.120 0 0 1-3-3l6.910-6.910a6 6 0 0 1 7.940-7.940l-3.760 3.760z" /></svg>
      </div>
      <div className={`${box} ml-2 w-12 rounded-xl`}>
        <svg width="24" height="24" viewBox="0 0 24 24" fill="none" stroke="#bcc1c6" strokeWidth="1.700" strokeLinecap="round" strokeLinejoin="round"><path d="M10 4.500H4.500A2 2 0 0 0 2.500 6.500V19.500A2 2 0 0 0 4.500 21.500H16.500A2 2 0 0 0 18.500 19.500V13.500M14.500 2H22V9.500M22 2L9.500 14.500" /></svg>
      </div>
    </div>
  );
}

const stats = [
  { label: "Casas", value: 7, tracking: "tracking-[-1.1px]" },
  { label: "Terrenos", value: 2, tracking: "tracking-[-1.2px]" },
  { label: "Comercial", value: 1, tracking: "tracking-[-0.6px]" },
];

export default function App() {
  return (
    <div className="flex h-[1376px] w-[1574px] flex-col overflow-hidden bg-[#4b3ac8] pt-[13px]">
      <Toolbar />
      <div className="flex min-h-0 grow overflow-hidden rounded-bl-[5px] bg-[#fc6036]">
        <div className="flex w-[1554px] shrink-0 flex-col items-center">
          <header className="relative z-10 flex h-32 w-full shrink-0 justify-center bg-[#eb5826] shadow-[0_10px_15px_-3px_rgba(0,0,0,0.1),0_4px_6px_-2px_rgba(0,0,0,0.08)]">
            <div className="mr-px flex w-[797px] items-center justify-between text-white">
              <ChevronLeft size={32} />
              <Logo />
              <LogOut size={32} />
            </div>
          </header>
          <main className="mr-px flex w-[861px] grow flex-col bg-[#f3f4f6] px-8 font-['Open_Sans']">
            <h1 className="mt-px h-10 whitespace-nowrap text-[40px] leading-10 font-bold tracking-[-1.3px] text-black">Panel de Administración</h1>
            <div className="mt-[39px] grid grid-cols-3 gap-4">
              {stats.map((s) => (
                <div key={s.label} className="flex h-[148px] flex-col rounded-2xl border-2 border-[#e97e63] bg-white pt-[22px] pl-[49px] text-[#330000] shadow-sm">
                  <span className={`text-[32px] leading-10 [-webkit-text-stroke:0.6px] ${s.tracking}`}>{s.label}</span>
                  <span className="mt-2 text-[47px] leading-[56px] font-bold">{s.value}</span>
                </div>
              ))}
            </div>
            <div className="mt-8 flex h-24 items-center rounded-xl bg-[#e87e62] px-2 text-[28px] text-[#330000] [-webkit-text-stroke:0.6px]">
              <div className="flex h-16 w-[390px] items-center justify-center gap-[17px] rounded-lg bg-[#f5a592] shadow-sm">
                <MapPin size={32} />
                <span className="tracking-[-0.5px]">Mapa</span>
              </div>
              <div className="flex h-16 grow items-center justify-center gap-4 pl-px">
                <ImageIcon size={32} />
                <span className="tracking-[-0.5px]">Lista</span>
              </div>
            </div>
            <div className="mt-8 h-[781px] overflow-hidden rounded-t-2xl shadow-[0_4px_14px_rgba(0,0,0,0.08)]">
              <CityMap />
            </div>
          </main>
        </div>
        <div className="flex w-5 shrink-0 flex-col bg-[#f1f1f1] pl-0.5">
          <svg className="h-[34px] w-[18px]" viewBox="0 0 18 34"><path d="M6.500 22L15 14L18 17V22Z" fill="#a3a3a3" /></svg>
          <div className="h-[816px] bg-[#c1c1c1]" />
          <svg className="mt-auto h-[34px] w-[18px]" viewBox="0 0 18 34"><path d="M6.500 15H18V20L15 23Z" fill="#505050" /></svg>
        </div>
      </div>
    </div>
  );
}
